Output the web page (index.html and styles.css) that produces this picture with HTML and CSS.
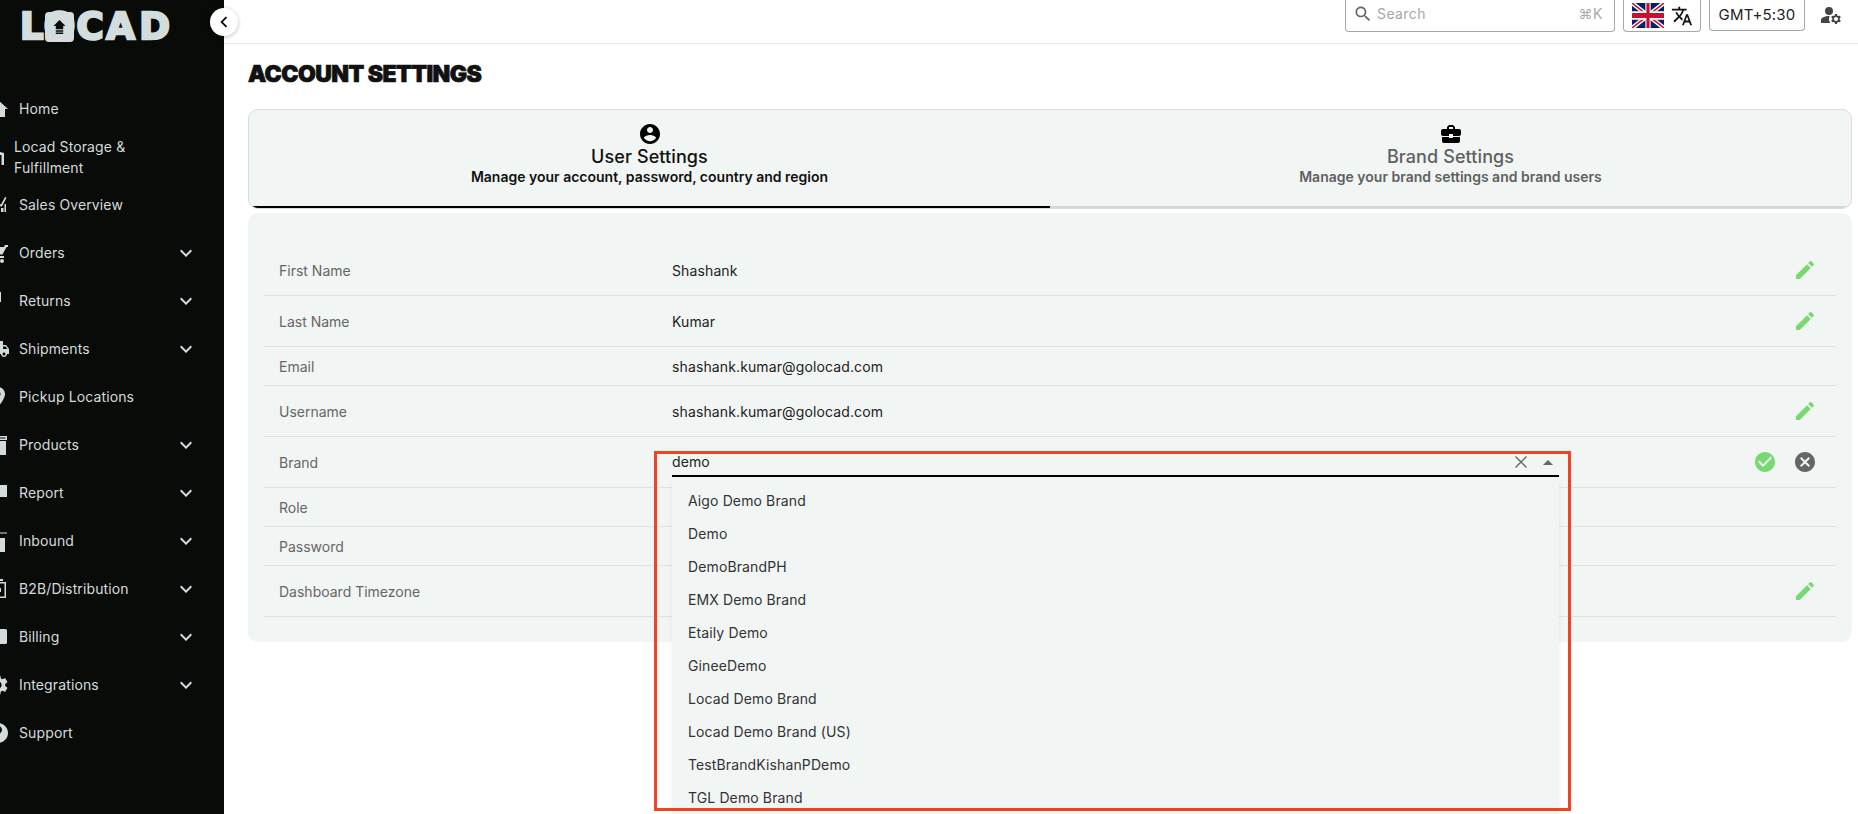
FILE: index.html
```html
<!DOCTYPE html>
<html lang="en">
<head>
<meta charset="utf-8">
<title>Account Settings</title>
<link rel="stylesheet" href="styles.css">
</head>
<body>
<svg class="defs" width="0" height="0" aria-hidden="true">
  <defs>
    <symbol id="i-chev" viewBox="0 0 24 24"><path d="M16.59 8.59L12 13.17 7.41 8.59 6 10l6 6 6-6z"/></symbol>
    <symbol id="i-pencil" viewBox="0 0 24 24"><path d="M3 17.25V21h3.75L17.81 9.94l-3.75-3.75L3 17.25zM20.71 7.04c.39-.39.39-1.02 0-1.41l-2.34-2.34c-.39-.39-1.02-.39-1.41 0l-1.83 1.83 3.75 3.75 1.83-1.83z"/></symbol>
    <symbol id="i-home" viewBox="0 0 24 24"><path d="M10 20v-6h4v6h5v-8h3L12 3 2 12h3v8z"/></symbol>
    <symbol id="i-ware" viewBox="0 0 24 24"><path d="M22 20V8l-9-2-9 2v12h2.500V10h13v10z"/></symbol>
    <symbol id="i-sales" viewBox="0 0 24 24"><path d="M11 13h2.500v6H11zM15 15h2.500v4H15zM18.500 11H20v8h-1.500zM12 10l3 1.500L19 4l1.500.8-4.800 9L12 12z"/></symbol>
    <symbol id="i-cart" viewBox="0 0 24 24"><path d="M3 6h15l.9-2H22v2h-1.500l-4 7.500H7zM4 15h14v2H4zM14 20a2 2 0 1 0 4 0a2 2 0 1 0-4 0zM4 20a2 2 0 1 0 4 0a2 2 0 1 0-4 0z"/></symbol>
    <symbol id="i-ret" viewBox="0 0 24 24"><path d="M0 3h15v10H0z"/></symbol>
    <symbol id="i-ship" viewBox="0 0 24 24"><path d="M20 8h-3V4H3c-1.100 0-2 .9-2 2v11h2c0 1.660 1.340 3 3 3s3-1.340 3-3h6c0 1.660 1.340 3 3 3s3-1.340 3-3h2v-5l-3-4zM6 18.500c-.83 0-1.500-.67-1.500-1.500s.67-1.500 1.500-1.500 1.500.67 1.500 1.500-.67 1.500-1.500 1.500zm13.500-9l1.960 2.500H17V9.500h2.500zm-1.500 9c-.83 0-1.500-.67-1.500-1.500s.67-1.500 1.500-1.500 1.500.67 1.500 1.500-.67 1.500-1.500 1.500z"/></symbol>
    <symbol id="i-pin" viewBox="0 0 24 24"><path d="M12 2C8.130 2 5 5.130 5 9c0 5.250 7 13 7 13s7-7.750 7-13c0-3.870-3.130-7-7-7zm0 9.500a2.500 2.500 0 010-5 2.500 2.500 0 010 5z"/></symbol>
    <symbol id="i-box" viewBox="0 0 24 24"><path d="M3 3h18v4H3zm1.500 1.500v1h15v-1zM4 8h16v14H4z" fill-rule="evenodd"/></symbol>
    <symbol id="i-report" viewBox="0 0 24 24"><path d="M3 4h18v12H3z"/></symbol>
    <symbol id="i-in" viewBox="0 0 24 24"><path d="M4 9h15v14H4zM14 3.500h7v1h-7z"/></symbol>
    <symbol id="i-b2b" viewBox="0 0 24 24"><path d="M3 5h17v16H3zm1.500 1.500v13h14v-13zM13 2h4v2h-4zM12 11h3v4h-3z" fill-rule="evenodd"/></symbol>
    <symbol id="i-bill" viewBox="0 0 24 24"><path d="M4 4h15.500a1.500 1.500 0 0 1 1.500 1.500v12a1.500 1.500 0 0 1-1.500 1.500H4z"/></symbol>
    <symbol id="i-gear" viewBox="0 0 24 24"><path d="M19.140 12.940c.04-.3.06-.61.06-.94 0-.32-.02-.64-.07-.94l2.030-1.580c.18-.14.23-.41.12-.61l-1.920-3.320c-.12-.22-.37-.29-.59-.22l-2.390.96c-.5-.38-1.030-.7-1.620-.94l-.36-2.540c-.04-.24-.24-.41-.48-.41h-3.840c-.24 0-.43.17-.47.41l-.36 2.540c-.59.24-1.130.57-1.620.94l-2.390-.96c-.22-.08-.47 0-.59.22L2.740 8.870c-.12.21-.08.47.12.61l2.030 1.580c-.05.3-.09.63-.09.94s.02.64.07.94l-2.030 1.580c-.18.14-.23.41-.12.61l1.920 3.320c.12.22.37.29.59.22l2.390-.96c.5.38 1.030.7 1.620.94l.36 2.540c.05.24.24.41.48.41h3.840c.24 0 .44-.17.47-.41l.36-2.540c.59-.24 1.130-.56 1.620-.94l2.390.96c.22.08.47 0 .59-.22l1.920-3.320c.12-.22.07-.47-.12-.61l-2.010-1.580zM12 15.600c-1.980 0-3.600-1.620-3.600-3.600s1.620-3.600 3.600-3.600 3.600 1.620 3.600 3.600-1.620 3.600-3.600 3.600z"/></symbol>
    <symbol id="i-help" viewBox="0 0 24 24"><path d="M12 2C6.480 2 2 6.480 2 12s4.480 10 10 10 10-4.480 10-10S17.520 2 12 2zm1 17h-2v-2h2v2zm2.070-7.750l-.9.92C13.450 12.900 13 13.500 13 15h-2v-.5c0-1.100.45-2.100 1.170-2.830l1.240-1.260c.37-.36.59-.86.59-1.410 0-1.100-.9-2-2-2s-2 .9-2 2H8c0-2.210 1.790-4 4-4s4 1.790 4 4c0 .88-.36 1.680-.93 2.250z"/></symbol>
  </defs>
</svg>

<div class="app">
  <aside class="sidebar">
    <div class="logo">
      <span class="logo-l logo-l-1">L</span>
      <span class="logo-l logo-l-2">O
        <svg class="logo-house-icon" viewBox="0 0 14 16" width="13" height="15"><path class="logo-house" d="M7 0l6.500 6.500H11V10H3V6.500H.5zM3 11h8v1.500H3zM3 13.500h8V15H3z"/></svg>
      </span>
      <span class="logo-l logo-l-3">C</span>
      <span class="logo-l logo-l-4">A</span>
      <span class="logo-l logo-l-5">D</span>
    </div>
    <nav class="nav">
      <a class="nav-item"><svg class="nav-icon"><use href="#i-home"/></svg><span class="nav-label">Home</span></a>
      <a class="nav-item nav-item-wrap"><svg class="nav-icon nav-icon-wrap"><use href="#i-ware"/></svg><span class="nav-label nav-label-wrap">Locad Storage &amp; Fulfillment</span></a>
      <a class="nav-item"><svg class="nav-icon"><use href="#i-sales"/></svg><span class="nav-label">Sales Overview</span></a>
      <a class="nav-item"><svg class="nav-icon"><use href="#i-cart"/></svg><span class="nav-label">Orders</span><svg class="nav-chev"><use href="#i-chev"/></svg></a>
      <a class="nav-item"><svg class="nav-icon"><use href="#i-ret"/></svg><span class="nav-label">Returns</span><svg class="nav-chev"><use href="#i-chev"/></svg></a>
      <a class="nav-item"><svg class="nav-icon"><use href="#i-ship"/></svg><span class="nav-label">Shipments</span><svg class="nav-chev"><use href="#i-chev"/></svg></a>
      <a class="nav-item"><svg class="nav-icon"><use href="#i-pin"/></svg><span class="nav-label">Pickup Locations</span></a>
      <a class="nav-item"><svg class="nav-icon"><use href="#i-box"/></svg><span class="nav-label">Products</span><svg class="nav-chev"><use href="#i-chev"/></svg></a>
      <a class="nav-item"><svg class="nav-icon"><use href="#i-report"/></svg><span class="nav-label">Report</span><svg class="nav-chev"><use href="#i-chev"/></svg></a>
      <a class="nav-item"><svg class="nav-icon"><use href="#i-in"/></svg><span class="nav-label">Inbound</span><svg class="nav-chev"><use href="#i-chev"/></svg></a>
      <a class="nav-item"><svg class="nav-icon"><use href="#i-b2b"/></svg><span class="nav-label">B2B/Distribution</span><svg class="nav-chev"><use href="#i-chev"/></svg></a>
      <a class="nav-item"><svg class="nav-icon"><use href="#i-bill"/></svg><span class="nav-label">Billing</span><svg class="nav-chev"><use href="#i-chev"/></svg></a>
      <a class="nav-item"><svg class="nav-icon"><use href="#i-gear"/></svg><span class="nav-label">Integrations</span><svg class="nav-chev"><use href="#i-chev"/></svg></a>
      <a class="nav-item"><svg class="nav-icon"><use href="#i-help"/></svg><span class="nav-label">Support</span></a>
    </nav>
    <button class="collapse" type="button" aria-label="Collapse">
      <svg viewBox="0 0 24 24" width="22" height="22"><path d="M15.410 7.410L14 6l-6 6 6 6 1.410-1.410L10.830 12z"/></svg>
    </button>
  </aside>

  <main class="main">
    <header class="topbar">
      <div class="search tool">
        <svg class="search-icon" viewBox="0 0 24 24" width="20" height="20"><path d="M15.500 14h-.79l-.28-.27C15.410 12.590 16 11.110 16 9.500 16 5.910 13.090 3 9.500 3S3 5.910 3 9.500 5.910 16 9.500 16c1.610 0 3.090-.59 4.230-1.570l.27.28v.79l5 4.990L20.490 19l-4.990-5zm-6 0C7.010 14 5 11.990 5 9.500S7.010 5 9.500 5 14 7.010 14 9.500 11.990 14 9.500 14z"/></svg>
        <span class="search-text">Search</span>
        <span class="search-key">⌘K</span>
      </div>
      <div class="lang tool">
        <svg class="flag" viewBox="0 0 60 30" preserveAspectRatio="none" width="32" height="25">
          <rect width="60" height="30" fill="#012169"/>
          <path d="M0 0L60 30M60 0L0 30" stroke="#fff" stroke-width="6"/>
          <path d="M0 0L60 30M60 0L0 30" stroke="#c8102e" stroke-width="2"/>
          <path d="M30 0V30M0 15H60" stroke="#fff" stroke-width="10"/>
          <path d="M30 0V30M0 15H60" stroke="#c8102e" stroke-width="6"/>
        </svg>
        <svg class="translate" viewBox="0 0 24 24" width="22" height="22"><path d="M12.870 15.070l-2.540-2.510.03-.03c1.740-1.940 2.980-4.170 3.710-6.530H17V4h-7V2H8v2H1v1.990h11.170C11.500 7.920 10.440 9.750 9 11.350 8.070 10.320 7.300 9.190 6.690 8h-2c.73 1.630 1.730 3.170 2.980 4.560l-5.090 5.020L4 19l5-5 3.110 3.110.76-2.040zM18.500 10h-2L12 22h2l1.120-3h4.750L21 22h2l-4.500-12zm-2.620 7l1.620-4.330L19.120 17h-3.240z"/></svg>
      </div>
      <div class="tz tool">GMT+5:30</div>
      <svg class="manage" viewBox="0 0 24 24" width="24" height="24"><circle cx="10" cy="8" r="4"/><path d="M10.670 13.020C10.450 13.010 10.230 13 10 13c-2.420 0-4.680.67-6.610 1.820-.88.52-1.390 1.500-1.390 2.530V20h9.260c-.79-1.130-1.260-2.510-1.260-4 0-1.070.25-2.070.67-2.980z"/><path d="M20.750 16c0-.22-.03-.42-.06-.63l1.140-1.010-1-1.730-1.450.49c-.32-.27-.68-.48-1.080-.63L18 11h-2l-.3 1.490c-.4.15-.76.36-1.080.63l-1.450-.49-1 1.730 1.140 1.010c-.03.21-.06.41-.06.63s.03.42.06.63l-1.140 1.010 1 1.730 1.450-.49c.32.27.68.48 1.080.63L16 21h2l.3-1.490c.4-.15.76-.36 1.080-.63l1.450.49 1-1.730-1.140-1.010c.03-.21.06-.41.06-.63zM17 18c-1.100 0-2-.9-2-2s.9-2 2-2 2 .9 2 2-.9 2-2 2z"/></svg>
    </header>

    <section class="content">
      <h1 class="page-title">ACCOUNT SETTINGS</h1>

      <div class="tabs">
        <div class="tab tab-active">
          <svg class="tab-icon" viewBox="0 0 24 24" width="24" height="24"><path d="M12 2C6.480 2 2 6.480 2 12s4.480 10 10 10 10-4.480 10-10S17.520 2 12 2zm0 3c1.660 0 3 1.340 3 3s-1.340 3-3 3-3-1.340-3-3 1.340-3 3-3zm0 14.200c-2.500 0-4.710-1.280-6-3.220.03-1.990 4-3.080 6-3.080 1.990 0 5.970 1.090 6 3.080-1.290 1.940-3.500 3.220-6 3.220z"/></svg>
          <div class="tab-title">User Settings</div>
          <div class="tab-sub">Manage your account, password, country and region</div>
        </div>
        <div class="tab">
          <svg class="tab-icon" viewBox="0 0 24 24" width="24" height="24"><path d="M10 16v-1H3.010L3 19c0 1.110.89 2 2 2h14c1.110 0 2-.89 2-2v-4h-7v1h-4zm10-9h-4.010V5l-2-2h-4l-2 2v2H4c-1.100 0-2 .9-2 2v3c0 1.110.89 2 2 2h6v-2h4v2h6c1.100 0 2-.9 2-2V9c0-1.100-.9-2-2-2zm-6 0h-4V5h4v2z"/></svg>
          <div class="tab-title">Brand Settings</div>
          <div class="tab-sub">Manage your brand settings and brand users</div>
        </div>
      </div>

      <div class="panel">
        <div class="row row-tall">
          <div class="label">First Name</div><div class="value">Shashank</div>
          <div class="actions"><svg class="act act-edit"><use href="#i-pencil"/></svg></div>
        </div>
        <div class="row row-tall">
          <div class="label">Last Name</div><div class="value">Kumar</div>
          <div class="actions"><svg class="act act-edit"><use href="#i-pencil"/></svg></div>
        </div>
        <div class="row">
          <div class="label">Email</div><div class="value">shashank.kumar@golocad.com</div><div class="actions"></div>
        </div>
        <div class="row row-tall">
          <div class="label">Username</div><div class="value">shashank.kumar@golocad.com</div>
          <div class="actions"><svg class="act act-edit"><use href="#i-pencil"/></svg></div>
        </div>
        <div class="row row-tall row-brand">
          <div class="label">Brand</div>
          <div class="combo">
            <span class="combo-text">demo</span>
            <svg class="combo-clear" viewBox="0 0 14 14" width="14" height="14"><path d="M1.500 1.500l11 11M12.500 1.500l-11 11"/></svg>
            <span class="combo-arrow"></span>
            <ul class="menu">
              <li class="option">Aigo Demo Brand</li>
              <li class="option">Demo</li>
              <li class="option">DemoBrandPH</li>
              <li class="option">EMX Demo Brand</li>
              <li class="option">Etaily Demo</li>
              <li class="option">GineeDemo</li>
              <li class="option">Locad Demo Brand</li>
              <li class="option">Locad Demo Brand (US)</li>
              <li class="option">TestBrandKishanPDemo</li>
              <li class="option">TGL Demo Brand</li>
            </ul>
            <div class="highlight"></div>
          </div>
          <div class="actions">
            <svg class="act act-ok" viewBox="0 0 24 24"><path d="M12 2C6.480 2 2 6.480 2 12s4.480 10 10 10 10-4.480 10-10S17.520 2 12 2zm-2 15l-5-5 1.410-1.410L10 14.170l7.590-7.590L19 8l-9 9z"/></svg>
            <svg class="act act-cancel" viewBox="0 0 24 24"><path d="M12 2C6.470 2 2 6.470 2 12s4.470 10 10 10 10-4.470 10-10S17.530 2 12 2zm5 13.590L15.590 17 12 13.410 8.410 17 7 15.590 10.590 12 7 8.410 8.410 7 12 10.590 15.590 7 17 8.410 13.410 12 17 15.590z"/></svg>
          </div>
        </div>
        <div class="row">
          <div class="label">Role</div><div class="value"></div><div class="actions"></div>
        </div>
        <div class="row">
          <div class="label">Password</div><div class="value"></div><div class="actions"></div>
        </div>
        <div class="row row-tall">
          <div class="label">Dashboard Timezone</div><div class="value"></div>
          <div class="actions"><svg class="act act-edit"><use href="#i-pencil"/></svg></div>
        </div>
      </div>
    </section>
  </main>
</div>
</body>
</html>
```
FILE: styles.css
```css
* { box-sizing: border-box; }
html, body { margin: 0; height: 814px; overflow: hidden; background: #fff; }
body { font-family: Inter, "Liberation Sans", sans-serif; font-size: 14px; color: #222; }
.defs { position: absolute; }

.app { display: flex; height: 814px; overflow: hidden; }

/* sidebar */
.sidebar { position: relative; z-index: 3; flex: 0 0 224px; width: 224px; background: #090b09; color: #d3dcdc; }
.logo { display: flex; align-items: flex-start; height: 85px; padding: 12px 0 0 19px; font-family: "DejaVu Sans", sans-serif; font-weight: 700; font-size: 37px; color: #d3dddd; }
.logo-l { position: relative; display: flex; justify-content: center; align-items: center; height: 30px; line-height: 30px; -webkit-text-stroke: 2.500px #d3dddd; }
.logo-l-1 { width: 24px; margin-right: 2px; justify-content: flex-start; padding-left: 1px; }
.logo-l-2 { width: 29px; margin-right: 3px; border-radius: 4px; background: #d3dddd; }
.logo-l-3 { width: 26px; }
.logo-l-4 { width: 35px; margin-right: 2px; }
.logo-l-5 { width: 29px; }
.logo-house-icon { position: absolute; left: 8px; top: 8px; }
.logo-house { fill: #090b09; }

.nav-item { display: flex; align-items: center; height: 48px; padding-right: 26px; font-size: 14px; letter-spacing: .12px; }
.nav-icon { flex: 0 0 24px; width: 24px; height: 24px; margin-left: -14px; margin-right: 9px; fill: #d3dcdc; }
.nav-icon-wrap { margin-left: -18px; margin-right: 8px; }
.nav-label { flex: 1; line-height: 21px; padding-bottom: 1px; }
.nav-label-wrap { max-width: 120px; }
.nav-chev { flex: 0 0 24px; width: 24px; height: 24px; fill: #d3dcdc; }

.collapse { position: absolute; right: -14px; top: 8px; width: 28px; height: 28px; padding: 0; border: 0; border-radius: 50%; background: #fff; box-shadow: 0 1px 4px rgba(0,0,0,.25); display: flex; align-items: center; justify-content: center; }
.collapse svg { fill: #0b0b0b; }

/* main */
.main { flex: 1; min-width: 0; }
.topbar { height: 44px; border-bottom: 1px solid #e4e6e6; display: flex; align-items: flex-end; justify-content: flex-end; gap: 8px; padding: 0 15px 11px 0; overflow: hidden; }
.tool { border: 1px solid #a5a8a8; border-top: 0; border-radius: 0 0 4px 4px; display: flex; align-items: center; }
.search { width: 270px; height: 32px; padding: 0 11px 4px 7px; }
.search-icon { fill: #666; flex: none; margin-right: 4px; }
.search-text { flex: 1; color: #a6a6a6; letter-spacing: .4px; }
.search-key { color: #aaa; font-size: 14px; letter-spacing: .6px; }
.lang { width: 78px; height: 32px; padding: 0 8px 0 8px; gap: 7px; }
.flag { flex: none; }
.translate { fill: #111; flex: none; }
.tz { width: 96px; height: 31px; padding-bottom: 2px; justify-content: center; font-size: 15px; letter-spacing: .2px; color: #222; margin-bottom: 1px; }
.manage { fill: #444; margin: 0 0 5px 6px; flex: none; }

.content { padding: 20px 6px 0 24px; }
.page-title { margin: 0 0 24px; font-size: 23px; line-height: 21px; font-weight: 900; color: #111; letter-spacing: -.55px; -webkit-text-stroke: .7px #111; }

.tabs { display: flex; height: 100px; border: 1px solid #d8dcdc; border-radius: 10px; background: #f1f5f4; overflow: hidden; }
.tab { flex: 1; display: flex; flex-direction: column; align-items: center; padding-top: 12px; color: #5f6161; border-bottom: 2px solid #d5d8d8; }
.tab-active { color: #111; border-bottom-color: #000; }
.tab-icon { fill: #000; flex: none; }
.tab-title { font-size: 18px; line-height: 22px; font-weight: 500; letter-spacing: .1px; }
.tab-sub { font-size: 14px; line-height: 18px; font-weight: 600; }

.panel { margin-top: 4px; padding: 32px 16px 25px; height: 429px; border-radius: 10px; background: #f1f5f4; }
.row { display: grid; grid-template-columns: 408px 887px 1fr; height: 39px; border-bottom: 1px solid #e0e3e3; align-items: center; position: relative; }
.row-tall { height: 51px; }
.row-brand { z-index: 2; }
.label { padding-left: 15px; color: #666; letter-spacing: 0; }
.value { color: #222; letter-spacing: .12px; }
.actions { display: flex; justify-content: flex-end; align-items: center; gap: 16px; padding-right: 19px; }
.act { width: 24px; height: 24px; flex: none; }
.act-edit, .act-ok { fill: #77d970; }
.act-cancel { fill: #666; }

.combo { position: relative; align-self: start; margin-top: 12px; height: 28px; border-bottom: 2px solid #000; display: flex; align-items: center; }
.combo-text { flex: 1; padding-bottom: 2px; letter-spacing: .12px; color: #222; }
.combo-clear { fill: none; stroke: #666; stroke-width: 1.300; margin-right: 15px; }
.combo-arrow { width: 0; height: 0; margin-right: 6px; border: 5px solid transparent; border-top: 0; border-bottom: 5px solid #666; }
.menu { position: absolute; left: 0; right: 0; top: 28px; height: 340px; margin: 0; padding: 7px 0 0; list-style: none; background: #f1f5f4; border-radius: 4px 4px 0 0; box-shadow: 0 2px 6px rgba(0,0,0,.06); overflow: hidden; }
.option { height: 33px; line-height: 33px; padding-left: 16px; letter-spacing: .12px; color: #333; }
.highlight { position: absolute; left: -18px; top: 2px; width: 917px; height: 360px; border: 3px solid #ef4226; pointer-events: none; }
```
